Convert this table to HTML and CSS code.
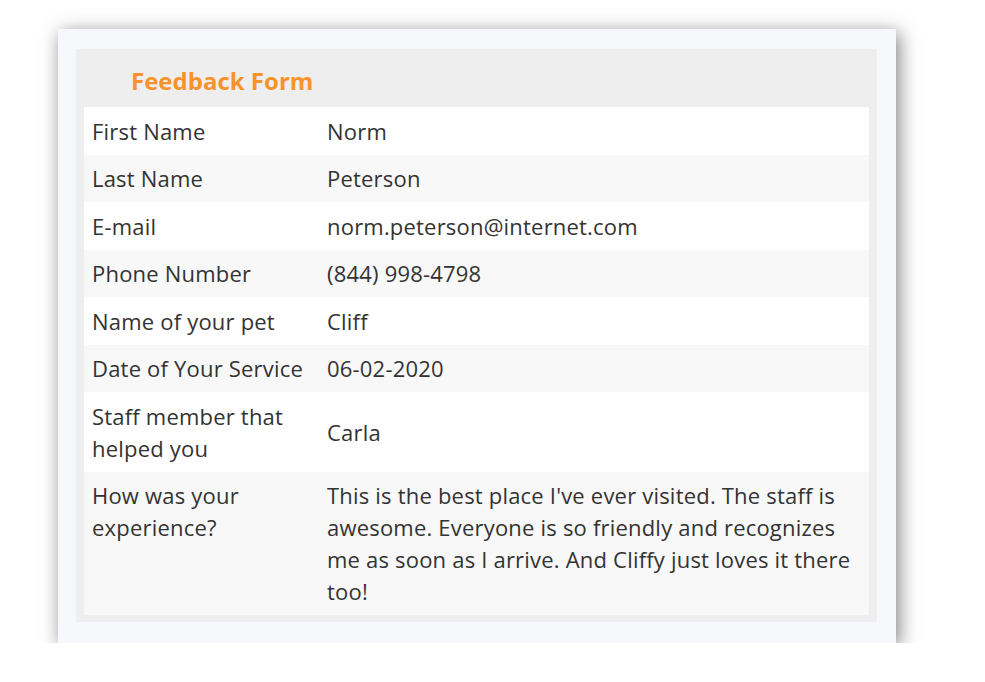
FILE: index.html
```html
<!DOCTYPE html>
<html>
<head>
<meta charset="utf-8">
<link rel="stylesheet" href="styles.css">
</head>
<body>
<div class="card">
  <div class="panel">
    <h1 class="title">Feedback Form</h1>
    <table class="form-table">
      <tr><td class="label">First Name</td><td class="value">Norm</td></tr>
      <tr><td class="label">Last Name</td><td class="value">Peterson</td></tr>
      <tr><td class="label">E-mail</td><td class="value">norm.peterson@internet.com</td></tr>
      <tr><td class="label">Phone Number</td><td class="value">(844) 998-4798</td></tr>
      <tr><td class="label">Name of your pet</td><td class="value">Cliff</td></tr>
      <tr><td class="label">Date of Your Service</td><td class="value">06-02-2020</td></tr>
      <tr><td class="label">Staff member that helped you</td><td class="value">Carla</td></tr>
      <tr><td class="label">How was your experience?</td><td class="value">This is the best place I've ever visited. The staff is awesome. Everyone is so friendly and recognizes me as soon as I arrive. And Cliffy just loves it there too!</td></tr>
    </table>
  </div>
</div>
</body>
</html>
```
FILE: styles.css
```css
html, body {
  margin: 0;
  padding: 0;
  background: #ffffff;
}
body {
  padding: 29px 0 0 58px;
  font-family: "Open Sans", "Noto Sans", sans-serif;
}
.card {
  width: 838px;
  box-sizing: border-box;
  background: #f7f8fc;
  padding: 20px 19px 21px 18px;
  box-shadow: 3px 4px 18px rgba(0, 0, 0, 0.5);
}
.panel {
  background: #eeeeee;
  padding: 0 8px 7px 8px;
}
.title {
  margin: 0;
  height: 58px;
  box-sizing: border-box;
  padding: 16px 0 0 47px;
  font-size: 24px;
  line-height: 32px;
  font-weight: 700;
  color: #f7932b;
}
.form-table {
  width: 100%;
  border-collapse: collapse;
  font-size: 22px;
  line-height: 32px;
  letter-spacing: 0.2px;
  color: #333333;
}
.form-table tr:nth-child(odd) { background: #ffffff; }
.form-table tr:nth-child(even) { background: #f8f8f8; }
.form-table td {
  padding: 7.75px 8px;
}
.label {
  width: 219px;
  vertical-align: top;
}
.value {
  vertical-align: middle;
}
```
